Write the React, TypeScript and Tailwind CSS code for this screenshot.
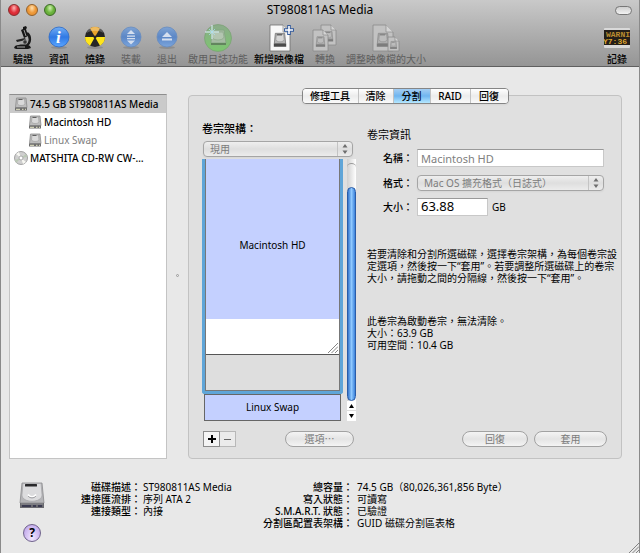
import { useState } from "react";
import type { ReactNode } from "react";

interface ToolbarItem {
  label: string;
  width: string;
  icon: ReactNode;
  disabled?: boolean;
}

interface Detail {
  label: string;
  value: string;
}

const TABS = [
  { label: "修理工具", width: "w-14" },
  { label: "清除", width: "w-[35px]" },
  { label: "分割", width: "w-[37px]" },
  { label: "RAID", width: "w-10" },
  { label: "回復", width: "w-[37px]" },
];

const DISK_DETAILS: Detail[] = [
  { label: "磁碟描述：", value: "ST980811AS Media" },
  { label: "連接匯流排：", value: "序列 ATA 2" },
  { label: "連接類型：", value: "內接" },
];

const CAPACITY_DETAILS: Detail[] = [
  { label: "總容量：", value: "74.5 GB（80,026,361,856 Byte）" },
  { label: "寫入狀態：", value: "可讀寫" },
  { label: "S.M.A.R.T. 狀態：", value: "已驗證" },
  { label: "分割區配置表架構：", value: "GUID 磁碟分割區表格" },
];

function DriveIcon() {
  return (
    <svg viewBox="0 0 26 27" className="mt-px h-[27px] w-[26px]" aria-hidden="true">
      <path d="M3 1h20l2 20H1z" fill="#b5b5b8" stroke="#8a8a8d" strokeWidth=".8" />
      <path d="M4 1.500h18l1 11c1 9-21 9-20 0z" fill="#dcdcde" stroke="#a5a5a8" strokeWidth=".7" />
      <rect x="6" y="2" width="12" height="2.500" rx=".5" fill="#29292b" />
      <path d="M9 12.500c2 3 6 3 8 0" fill="none" stroke="#fff" strokeWidth="1.600" />
      <path d="M9 14c2 2.500 6 2.500 8 0" fill="none" stroke="#88888c" strokeWidth=".8" />
      <path d="M1 21h24v5H1z" fill="#6a6a70" />
      <path d="M2 22h22" stroke="#9a9aa0" strokeWidth=".8" />
      <path d="M3 24h9M14 24h3M19 24h4" stroke="#2b2b45" strokeWidth="1.500" />
    </svg>
  );
}

function SmallDriveIcon() {
  return (
    <svg viewBox="0 0 14 14" className="size-3.5 shrink-0" aria-hidden="true">
      <path d="M2.500 1h9.500l1 9.500H1.500z" fill="#bdbdbd" stroke="#8b8b8b" strokeWidth=".8" />
      <path d="M4 2h6.500l.5 5c-1 2-6.500 2-7.500 0z" fill="#d9d9d9" stroke="#989898" strokeWidth=".6" />
      <path d="M4.500 2.500h4" stroke="#555" strokeWidth=".9" />
      <path d="M1 10.500h12v3H1z" fill="#6f6f6f" />
      <path d="M2 12.300h4M8 12.300h1.500M11 12.300h1" stroke="#e9e9c9" strokeWidth="1" />
    </svg>
  );
}

function DiscIcon() {
  return (
    <svg viewBox="0 0 14 14" className="size-3.5 shrink-0" aria-hidden="true">
      <circle cx="7" cy="7" r="6.500" fill="#cfcfcf" stroke="#8f8f8f" strokeWidth=".8" />
      <path d="M7 7L2 3l3-2zM7 7l5 4-3 2z" fill="#f7f7f2" />
      <path d="M7 7l5-4 1 3zM7 7l-5 5-1-3z" fill="#b9c7b4" />
      <circle cx="7" cy="7" r="2" fill="#fff" stroke="#999" strokeWidth=".8" />
    </svg>
  );
}

function MicroscopeIcon() {
  return (
    <svg viewBox="0 0 20 26" className="h-[26px] w-5" aria-hidden="true">
      <path d="M10 2l3-1 1 2-1 1 2 7-4 2-3-8 2-1z" fill="#161616" />
      <path d="M11 5l2 6" stroke="#999" strokeWidth="1" />
      <path d="M14 8c4 3 4 10-1 13" fill="none" stroke="#1b1b1b" strokeWidth="2.500" />
      <path d="M3 15l9-2 1 2-9 2z" fill="#222" />
      <circle cx="12" cy="17" r="2.200" fill="#333" stroke="#aaa" strokeWidth=".7" />
      <path d="M2 21c4-2 12-2 15 0l1 2-3 1H3l-2-1z" fill="#181818" />
      <path d="M4 22h8" stroke="#bbb" strokeWidth=".9" />
    </svg>
  );
}

function BlueOrb({ faded, children }: { faded?: boolean; children: ReactNode }) {
  return (
    <svg viewBox="0 0 22 24" className="h-6 w-[22px]" aria-hidden="true">
      <defs>
        <linearGradient id={faded ? "orb-faded" : "orb"} x1="0" y1="0" x2="0" y2="1">
          <stop offset="0" stopColor={faded ? "#7fa3d3" : "#73aef4"} />
          <stop offset=".5" stopColor={faded ? "#5c87c6" : "#3079e4"} />
          <stop offset="1" stopColor={faded ? "#7ba5dc" : "#5aa5ff"} />
        </linearGradient>
      </defs>
      <ellipse cx="11" cy="21.500" rx="8" ry="1.500" fill="#777" opacity=".5" />
      <circle cx="11" cy="11" r="10" fill={faded ? "url(#orb-faded)" : "url(#orb)"} stroke={faded ? "#668bc0" : "#2868c8"} strokeWidth=".8" />
      {children}
    </svg>
  );
}

function BurnIcon() {
  return (
    <svg viewBox="0 0 22 24" className="h-6 w-[22px]" aria-hidden="true">
      <ellipse cx="11" cy="21.500" rx="8" ry="1.500" fill="#777" opacity=".5" />
      <circle cx="11" cy="11" r="10" fill="#262626" />
      <path d="M11 11L6 2.300a10 10 0 0 1 10 0z" fill="#e9a52d" />
      <path d="M11 11h10a10 10 0 0 1-5 8.700zM11 11H1a10 10 0 0 0 5 8.700z" fill="#ffe51c" />
      <path d="M2.500 7a9 9 0 0 1 17 0c-5-3-12-3-17 0z" fill="#fff" opacity=".25" />
      <circle cx="11" cy="11" r="1.500" fill="#262626" />
    </svg>
  );
}

function JournalIcon() {
  return (
    <svg viewBox="0 0 30 28" className="h-7 w-[30px]" aria-hidden="true">
      <defs>
        <linearGradient id="journal" x1="0" y1="0" x2="0" y2="1">
          <stop offset="0" stopColor="#8cab8b" />
          <stop offset="1" stopColor="#7cc66f" />
        </linearGradient>
      </defs>
      <circle cx="15" cy="14" r="13.500" fill="url(#journal)" stroke="#78a073" strokeWidth=".7" />
      <path d="M9 6h12l2 13H8z" fill="#a6bba4" stroke="#83a380" strokeWidth=".8" />
      <path d="M10 8h10l1 5c-1 4-11 4-12 0z" fill="#b3c5b1" stroke="#8ba888" strokeWidth=".7" />
      <path d="M8 20h15" stroke="#62855e" strokeWidth="2" />
      <path d="M9 1v14M2 8h14" stroke="#dff5ff" strokeWidth="1" />
      <path d="M6 5l6 6M12 5l-6 6" stroke="#a9dcec" strokeWidth=".8" />
    </svg>
  );
}

function Paper({ x, y, w, h, faded }: { x: number; y: number; w: number; h: number; faded?: boolean }) {
  const fold = Math.round(w / 3);
  // Drive drawn on a 12x13 grid, centred in the lower part of the sheet
  const scale = (w * 0.62) / 12;
  return (
    <g transform={`translate(${x} ${y})`}>
      <path
        d={`M0 0H${w - fold}L${w} ${fold}V${h}H0z`}
        fill={faded ? "#c2c2c2" : "#f8f8f8"}
        stroke={faded ? "#8a8a8a" : "#707070"}
        strokeWidth=".8"
      />
      <path d={`M${w - fold} 0V${fold}H${w}`} fill={faded ? "#d4d4d4" : "#e2e2e2"} stroke="#8b8b8b" strokeWidth=".7" />
      <g transform={`translate(${w * 0.19} ${h * 0.32}) scale(${scale})`}>
        <path d="M1.500 0h9l1 10H.5z" fill={faded ? "#aeaeae" : "#b4b4b4"} stroke={faded ? "#8a8a8a" : "#777"} strokeWidth=".8" />
        <path d="M2.500 1h7l.5 5c-1 3-7 3-8 0z" fill={faded ? "#bcbcbc" : "#d6d6d6"} stroke="#8d8d8d" strokeWidth=".6" />
        <path d="M3 1.500h5" stroke={faded ? "#7c7c7c" : "#444"} strokeWidth="1" />
        <path d="M0 10h12v3H0z" fill={faded ? "#7c7c7c" : "#4a4a4a"} />
      </g>
    </g>
  );
}

function NewImageIcon() {
  return (
    <svg viewBox="0 0 26 28" className="ml-1.5 h-7 w-[26px]" aria-hidden="true">
      <Paper x={1} y={1} w={20} h={26} />
      <path d="M20 1v10M15 6h10" stroke="#355c9e" strokeWidth="3.600" />
      <path d="M20 2v8M16 6h8" stroke="#fff" strokeWidth="1.600" />
    </svg>
  );
}

function ConvertIcon() {
  return (
    <svg viewBox="0 0 26 28" className="h-7 w-[26px]" aria-hidden="true">
      <Paper x={9} y={1} w={15} h={20} faded />
      <Paper x={1} y={6} w={15} h={21} faded />
    </svg>
  );
}

function ResizeImageIcon() {
  return (
    <svg viewBox="0 0 28 28" className="h-7 w-7" aria-hidden="true">
      <Paper x={1} y={1} w={20} h={26} faded />
      <Paper x={16} y={13} w={11} h={14} faded />
    </svg>
  );
}

function LogIcon() {
  return (
    <svg viewBox="0 0 28 22" className="h-[22px] w-7" aria-hidden="true">
      <defs>
        <clipPath id="log-screen">
          <rect x="1" y="3" width="26" height="15" />
        </clipPath>
      </defs>
      <rect x="1" y="1" width="26" height="20" rx="1" fill="#d9d9d9" />
      <rect x="1" y="3" width="26" height="15" fill="#241f19" />
      <g clipPath="url(#log-screen)" fontSize="8" fontFamily="Liberation Mono" fontWeight="700">
        <text x="3" y="10" fill="#b98c30">WARNIN</text>
        <text x="0" y="17" fill="#dfa52f">Y7:36</text>
      </g>
    </svg>
  );
}

const TOOLBAR: ToolbarItem[] = [
  { label: "驗證", width: "w-9", icon: <MicroscopeIcon /> },
  {
    label: "資訊",
    width: "w-9",
    icon: (
      <BlueOrb>
        <text x="8" y="17" fontSize="17" fontFamily="Liberation Serif" fontStyle="italic" fontWeight="700" fill="#fff">i</text>
      </BlueOrb>
    ),
  },
  { label: "燒錄", width: "w-9", icon: <BurnIcon /> },
  {
    label: "裝載",
    width: "w-9",
    disabled: true,
    icon: (
      <BlueOrb faded>
        <path d="M11 4l4 4H7zM7 9.500h8v1.200H7zM7 12h8v1.200H7zM7 14.500h8l-4 4z" fill="#d5dfef" />
      </BlueOrb>
    ),
  },
  {
    label: "退出",
    width: "w-9",
    disabled: true,
    icon: (
      <BlueOrb faded>
        <path d="M11 6l5 5H6zM6 12.500h10v2H6z" fill="#d5dfef" />
      </BlueOrb>
    ),
  },
  { label: "啟用日誌功能", width: "w-[66px]", disabled: true, icon: <JournalIcon /> },
  { label: "新增映像檔", width: "w-14", icon: <NewImageIcon /> },
  { label: "轉換", width: "w-9", disabled: true, icon: <ConvertIcon /> },
  { label: "調整映像檔的大小", width: "w-[86px]", disabled: true, icon: <ResizeImageIcon /> },
];

function ToolbarButton({ item }: { item: ToolbarItem }) {
  return (
    <button
      disabled={item.disabled}
      className={`flex flex-col items-center whitespace-nowrap text-[10px] leading-3 ${item.width} ${
        item.disabled ? "text-[#5e5e5e]" : "font-medium text-black"
      }`}
    >
      <span className="flex h-[30px] items-center justify-center">{item.icon}</span>
      {item.label}
    </button>
  );
}

function UpDownArrows() {
  return (
    <span className="pointer-events-none absolute inset-y-0 right-0 flex w-[15px] items-center justify-center border-l border-[#c4c4c4]">
      <svg viewBox="0 0 6 10" className="h-2.5 w-1.5" aria-hidden="true">
        <path d="M3 0l2.500 3.500h-5zM3 10L.5 6.500h5z" fill="#6e6e6e" />
      </svg>
    </span>
  );
}

function PopUp({ id, value }: { id: string; value: string }) {
  return (
    <div className="relative h-4 rounded-[4px] border border-[#a5a5a5] bg-linear-to-b from-[#efefef] via-[#dedede] to-[#ececec] shadow-xs">
      <select id={id} disabled className="block h-3.5 w-full appearance-none pl-1.5 text-[10px] leading-3 text-[#7c7c7c] opacity-100">
        <option>{value}</option>
      </select>
      <UpDownArrows />
    </div>
  );
}

function PushButton({ label, width }: { label: string; width: string }) {
  return (
    <button
      disabled
      className={`flex h-4 items-center justify-center rounded-full border border-[#a2a2a2] bg-linear-to-b from-[#f4f4f4] via-[#e4e4e4] to-[#f4f4f4] text-[10px] leading-3 text-[#7c7c7c] ${width}`}
    >
      {label}
    </button>
  );
}

function DetailList({ items, className }: { items: Detail[]; className: string }) {
  return (
    <dl className={`grid content-start text-[10px] leading-3 whitespace-nowrap ${className}`}>
      {items.map(({ label, value }) => (
        <div key={label} className="contents">
          <dt className="text-right font-medium">{label}</dt>
          <dd>{value}</dd>
        </div>
      ))}
    </dl>
  );
}

function Grip({ className }: { className?: string }) {
  return (
    <svg viewBox="0 0 10 10" className={`size-2.5 ${className ?? ""}`} aria-hidden="true">
      <path d="M0 10L10 0M3.500 10L10 3.500M7 10l3-3" stroke="#777" strokeWidth=".9" />
    </svg>
  );
}

function TitleBar() {
  return (
    <header className="flex h-[67px] flex-col border-b border-[#5f5f5f] bg-linear-to-b from-[#c9c9c9] to-[#959595]">
      <div className="grid h-5 grid-cols-[1fr_auto_1fr] items-center px-[7px]">
        <div className="flex gap-1.5">
          <button aria-label="Close" className="size-3 rounded-full border border-[#8b2d2d] bg-radial-[at_50%_30%] from-[#ffb5b5] via-[#e0303a] to-[#c91f2a]" />
          <button aria-label="Minimize" className="size-3 rounded-full border border-[#93602a] bg-radial-[at_50%_30%] from-[#ffe0b0] via-[#ee9a3a] to-[#e08a2c]" />
          <button aria-label="Zoom" className="size-3 rounded-full border border-[#3c6a25] bg-radial-[at_50%_30%] from-[#d0f0b0] via-[#6db53f] to-[#5ba032]" />
        </div>
        <h1 className="text-[12px] leading-4">ST980811AS Media</h1>
        <button aria-label="Toggle toolbar" className="h-[9px] w-[17px] justify-self-end rounded-full border border-[#777] bg-linear-to-b from-[#cfcfcf] to-[#f2f2f2]" />
      </div>
      <nav className="flex pt-[3px] pr-1 pl-1">
        {TOOLBAR.map((item) => (
          <ToolbarButton key={item.label} item={item} />
        ))}
        <div className="ml-auto">
          <ToolbarButton item={{ label: "記錄", width: "w-9", icon: <LogIcon /> }} />
        </div>
      </nav>
    </header>
  );
}

function Sidebar() {
  const row = "flex h-[18px] w-full items-center gap-0.5 whitespace-nowrap text-left";
  return (
    <ul className="mt-[27px] w-[158px] shrink-0 border border-t-[#8e8e8e] border-[#c4c4c4] bg-white text-[10px] leading-4">
      <li>
        <button className={`${row} bg-[#cacaca] pl-1 font-medium`}>
          <SmallDriveIcon />
          74.5 GB ST980811AS Media
        </button>
      </li>
      <li>
        <button className={`${row} pl-[18px] font-medium`}>
          <SmallDriveIcon />
          Macintosh HD
        </button>
      </li>
      <li>
        <button className={`${row} pl-[18px] text-[#808080]`}>
          <SmallDriveIcon />
          Linux Swap
        </button>
      </li>
      <li>
        <button className={`${row} pl-1 font-medium`}>
          <DiscIcon />
          MATSHITA CD-RW CW-…
        </button>
      </li>
    </ul>
  );
}

function PartitionMap() {
  return (
    <div className="flex justify-between">
      <div className="w-[141px]">
        {/* Selected volume, with its ring cut off at the top of the scroll area */}
        <button className="block w-full rounded-b-[3px] border-x-3 border-b-3 border-[#5fa5d8]">
          <span className="block border-x border-b border-[#777]">
            <span className="flex h-40 items-center justify-center bg-[#c4d0ff] pt-3 text-[10px]">Macintosh HD</span>
            <span className="flex h-9 items-end justify-end border-b border-[#555] bg-white pr-px pb-px">
              <Grip />
            </span>
            <span className="block h-[35px] bg-[#dedede]" />
          </span>
        </button>
        <button className="mx-auto flex h-[27px] w-[137px] items-center justify-center border border-[#666] bg-[#c4d0ff] text-[10px]">
          Linux Swap
        </button>
      </div>
      {/* Scroll bar */}
      <div className="mr-px flex w-[9px] flex-col bg-linear-to-r from-[#d0d0d0] to-white">
        <div className="mt-1 h-6 rounded-t-full border-t border-[#999]" />
        <div className="flex-1 rounded-full border border-[#2a5ca8] bg-linear-to-r from-[#3576cc] via-[#8fc9ff] to-[#3b82da]" />
        <button aria-label="Scroll up" className="flex h-2.5 items-center justify-center border-b border-[#ddd] bg-white">
          <svg viewBox="0 0 5 4" className="h-1 w-[5px]"><path d="M2.500 0L5 4H0z" /></svg>
        </button>
        <button aria-label="Scroll down" className="flex h-2.5 items-center justify-center bg-white">
          <svg viewBox="0 0 5 4" className="h-1 w-[5px]"><path d="M2.500 4L5 0H0z" /></svg>
        </button>
      </div>
    </div>
  );
}

function VolumeScheme() {
  return (
    <section className="w-[155px] shrink-0 pt-[25px]">
      <label htmlFor="scheme" className="block text-[11px] leading-4 font-medium">卷宗架構：</label>
      <div className="mt-1 mb-0.5 ml-px w-[150px]">
        <PopUp id="scheme" value="現用" />
      </div>
      <PartitionMap />
      <div className="mt-2.5 flex pr-[3px]">
        <button aria-label="Add" className="ml-px flex h-4 w-[17px] items-center justify-center border border-[#8c8c8c] bg-[#f4f4f4]">
          <svg viewBox="0 0 8 8" className="size-2"><path d="M3 0h2v3h3v2H5v3H3V5H0V3h3z" /></svg>
        </button>
        <button aria-label="Remove" disabled className="flex h-4 w-4 items-center justify-center border border-l-0 border-[#b8b8b8] bg-[#ebebeb]">
          <span className="h-px w-[7px] bg-[#666]" />
        </button>
        <span className="flex-1" />
        <PushButton label="選項⋯" width="w-[69px]" />
      </div>
    </section>
  );
}

function VolumeInfo() {
  const [size, setSize] = useState("63.88");
  const label = "w-[46px] shrink-0 text-right text-[10px] leading-4 font-medium";
  const field = "border border-[#c8c8c8] border-t-[#999] bg-white px-[3px]";

  return (
    <section className="ml-2.5 flex min-w-0 flex-1 flex-col pt-[31px]">
      <h2 className="text-[11px] leading-4">卷宗資訊</h2>
      <div className="mt-1.5 mr-[3px] flex items-center gap-1">
        <label htmlFor="name" className={label}>名稱：</label>
        <input id="name" disabled value="Macintosh HD" className={`h-[18px] min-w-0 flex-1 text-[11px] text-[#808080] ${field}`} />
      </div>
      <div className="mt-2 mr-[3px] flex items-center gap-1">
        <label htmlFor="format" className={label}>格式：</label>
        <div className="min-w-0 flex-1">
          <PopUp id="format" value="Mac OS 擴充格式（日誌式）" />
        </div>
      </div>
      <div className="mt-[7px] flex items-center gap-1">
        <label htmlFor="size" className={label}>大小：</label>
        <input
          id="size"
          value={size}
          onChange={(e) => setSize(e.target.value)}
          className={`h-[18px] w-[71px] text-[13px] ${field}`}
        />
        <span className="text-[10px]">GB</span>
      </div>
      <p className="mt-8 text-[10px] leading-3 whitespace-nowrap">
        若要清除和分割所選磁碟，選擇卷宗架構，為每個卷宗設
        <br />
        定選項，然後按一下“套用”。若要調整所選磁碟上的卷宗
        <br />
        大小，請拖動之間的分隔線，然後按一下“套用”。
      </p>
      <p className="mt-[31px] text-[10px] leading-3 whitespace-nowrap">
        此卷宗為啟動卷宗，無法清除。
        <br />
        大小：63.9 GB
        <br />
        可用空間：10.4 GB
      </p>
      <div className="mt-auto flex justify-end gap-1.5">
        <PushButton label="回復" width="w-[66px]" />
        <PushButton label="套用" width="w-[73px]" />
      </div>
    </section>
  );
}

export default function App() {
  const [tab, setTab] = useState("分割");

  return (
    <div className="flex min-h-screen flex-col border-x border-[#8a8a8a] bg-[#e8e8e8] font-['Noto_Sans','Noto_Sans_CJK_TC',sans-serif] text-black">
      <TitleBar />
      <main className="flex pr-[17px] pl-2">
        <Sidebar />
        <div className="flex w-[21px] shrink-0 items-center justify-center pt-6">
          <span className="size-[3px] rounded-full border border-[#999]" />
        </div>
        <div className="flex min-w-0 flex-1 flex-col pt-[21px]">
          <div role="tablist" className="z-10 -mb-[9px] flex h-4 self-center overflow-hidden rounded-[4px] border border-[#858585] bg-[#f2f2f2] shadow-xs">
            {TABS.map(({ label, width }) => (
              <button
                key={label}
                role="tab"
                aria-selected={tab === label}
                onClick={() => setTab(label)}
                className={`flex items-center justify-center border-r border-[#c2c2c2] text-[10px] leading-3 font-medium last:border-r-0 ${width} ${
                  tab === label
                    ? "bg-linear-to-b from-[#a4cef3] via-[#6fb5f0] to-[#b5e8ff]"
                    : "bg-linear-to-b from-white via-[#ececec] to-[#fafafa]"
                }`}
              >
                {label}
              </button>
            ))}
          </div>
          <div className="flex rounded-[4px] border border-[#c2c2c2] bg-[#e0e0e0] pr-3.5 pb-[11px] pl-[13px]">
            <VolumeScheme />
            <VolumeInfo />
          </div>
        </div>
      </main>
      <footer className="flex flex-1 pt-[22px] pl-[18px]">
        <div className="flex w-[26px] flex-col items-center">
          <DriveIcon />
          <button aria-label="Help" className="mt-[15px] flex size-[18px] items-center justify-center rounded-full border border-[#6f628c] bg-radial-[at_50%_80%] from-[#f2e8ff] to-[#b79be6] text-[12px] leading-4 font-bold">
            ?
          </button>
        </div>
        <DetailList items={DISK_DETAILS} className="w-[205px] grid-cols-[96px_1fr] gap-x-0.5" />
        <DetailList items={CAPACITY_DETAILS} className="grid-cols-[103px_auto] gap-x-1" />
        <Grip className="ml-auto self-end" />
      </footer>
    </div>
  );
}
